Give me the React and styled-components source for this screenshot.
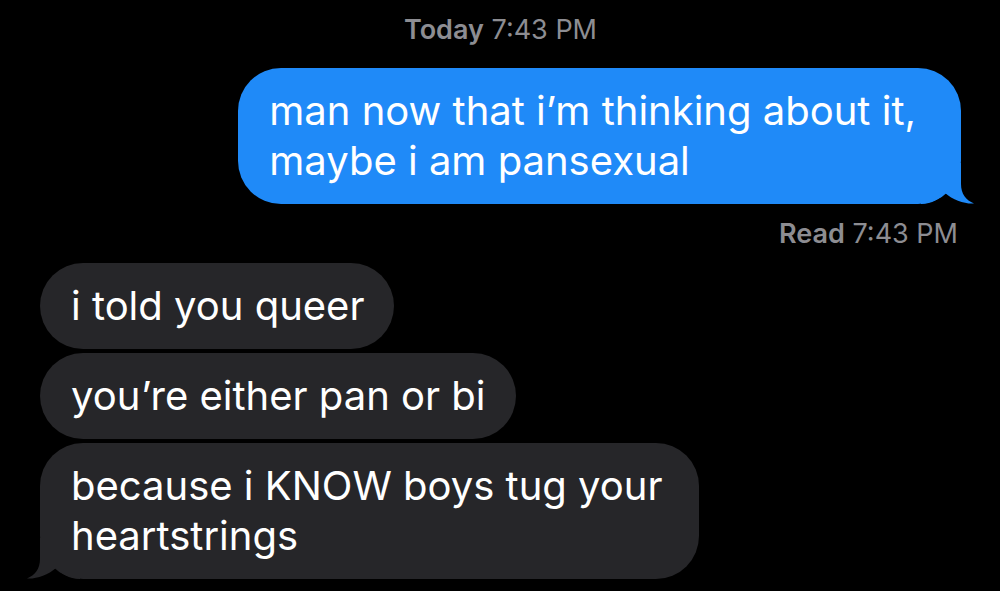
import React from "react";
import styled, { createGlobalStyle } from "styled-components";

const Global = createGlobalStyle`
  html, body { margin: 0; padding: 0; background: #000; }
  body { font-family: Inter, "Noto Sans", "Liberation Sans", sans-serif; -webkit-font-smoothing: antialiased; }
`;

const Screen = styled.div`
  width: 1000px;
  height: 591px;
  overflow: hidden;
  background: #000;
  display: flex;
  flex-direction: column;
  padding: 14px 39px 0 40px;
  box-sizing: border-box;
`;

const Stamp = styled.div`
  align-self: ${(p) => (p.$align === "right" ? "flex-end" : "center")};
  margin-top: ${(p) => p.$mt || 0}px;
  margin-right: ${(p) => (p.$align === "right" ? 3 : 0)}px;
  font-size: 27px;
  line-height: 32px;
  color: #8d8d92;
  white-space: nowrap;
  b { font-weight: 600; }
`;

const Row = styled.div`
  display: flex;
  justify-content: ${(p) => (p.$out ? "flex-end" : "flex-start")};
  margin-top: ${(p) => p.$mt || 0}px;
`;

const Bubble = styled.div`
  position: relative;
  z-index: 0;
  background: ${(p) => (p.$out ? "#1f8af8" : "#262629")};
  color: #fff;
  font-size: 40px;
  line-height: 50px;
  padding: 18px ${(p) => p.$pr || 30}px 18px 31px;
  border-radius: 43px;
  white-space: nowrap;
`;

const Tail = styled.svg`
  position: absolute;
  z-index: -1;
  bottom: 0;
  width: 54px;
  height: 41px;
  ${(p) =>
    p.$out
      ? "right: -14px;"
      : "left: -14px; transform: scaleX(-1);"}
`;

const TailShape = ({ out, color }) => (
  <Tail $out={out} viewBox="0 0 54 41">
    <path
      d="M0 0 H40 V21 C40 31 45 37 53 40.5 C44 41.2 32 37 24 30 C19 36 11 40.5 0 41 Z"
      fill={color}
    />
  </Tail>
);

export default function App() {
  return (
    <>
      <Global />
      <Screen>
        <Stamp>
          <b>Today</b> 7:43 PM
        </Stamp>
        <Row $out $mt={22}>
          <Bubble $out $pr={45}>
            man now that i’m thinking about it,
            <br />
            maybe i am pansexual
            <TailShape out color="#1f8af8" />
          </Bubble>
        </Row>
        <Stamp $align="right" $mt={14}>
          <b>Read</b> 7:43 PM
        </Stamp>
        <Row $mt={13}>
          <Bubble>i told you queer</Bubble>
        </Row>
        <Row $mt={4}>
          <Bubble>you’re either pan or bi</Bubble>
        </Row>
        <Row $mt={4}>
          <Bubble $pr={36}>
            because i KNOW boys tug your
            <br />
            heartstrings
            <TailShape color="#262629" />
          </Bubble>
        </Row>
      </Screen>
    </>
  );
}
